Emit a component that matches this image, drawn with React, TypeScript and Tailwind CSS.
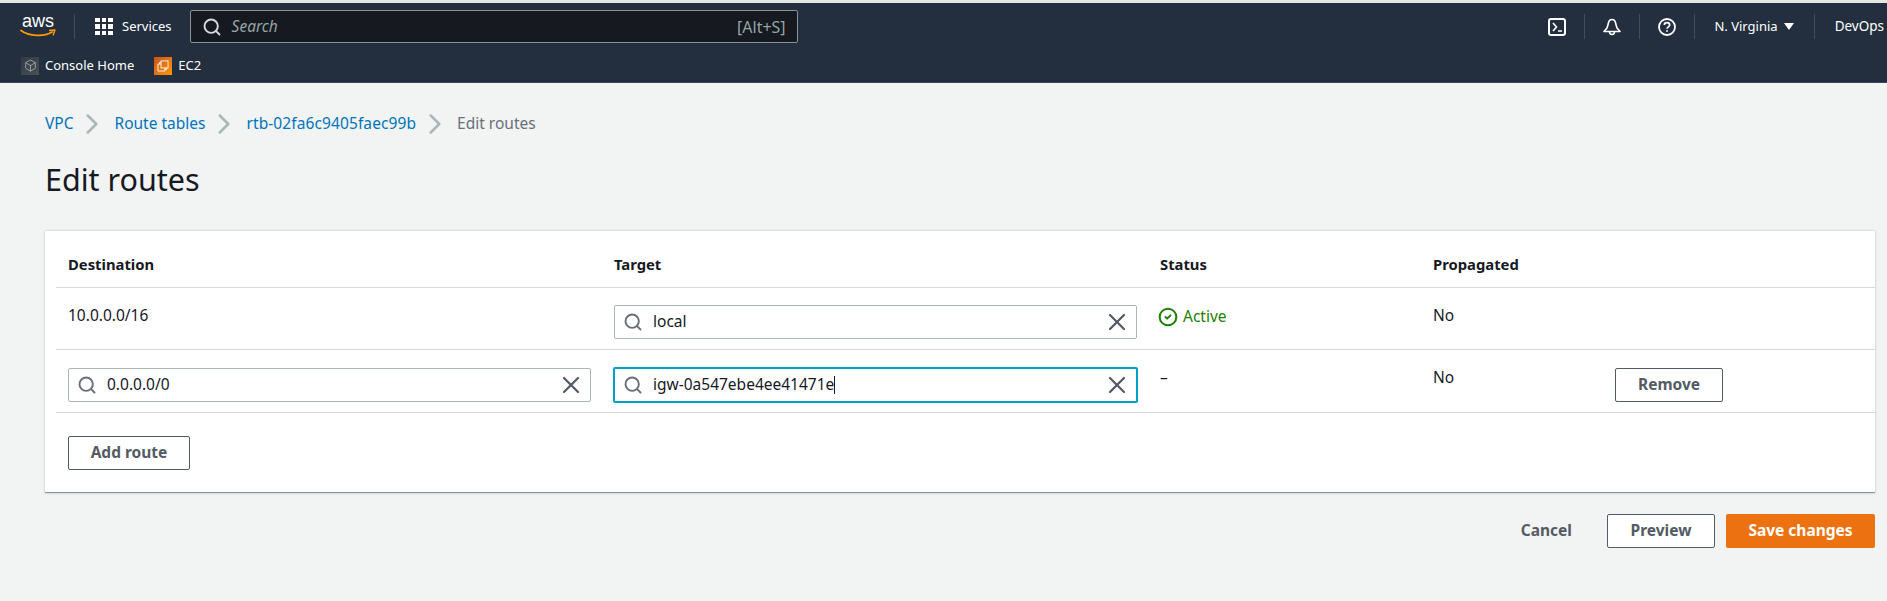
import { Search, X, CircleCheck, ChevronRight, Box } from "lucide-react";

const font = "font-['Noto_Sans',sans-serif]";

const Divider = () => <div className="w-px h-[25px] bg-[#414d5c]" />;

const AwsLogo = () => (
	<div className="w-[36px] h-[24px] flex flex-col items-center">
		<span className="text-[18px] leading-[13px] text-white font-['Liberation_Sans',sans-serif]">aws</span>
		<svg viewBox="0 0 36 9" className="w-[36px] h-[9px] mt-[1px]" fill="none">
			<path d="M1 1.5C9 7.5 24 8 32 3" stroke="#ff9900" strokeWidth="1.8" strokeLinecap="round" />
			<path d="M29 1.5L35 1L33 6.5" stroke="#ff9900" strokeWidth="1.4" strokeLinejoin="round" />
		</svg>
	</div>
);

const GridIcon = () => (
	<div className="grid grid-cols-3 gap-[2px] w-[18px] h-[18px]">
		{Array.from({ length: 9 }).map((_, i) => (
			<div className="bg-white w-[4.67px] h-[4.67px]" key={i} />
		))}
	</div>
);

const TerminalIcon = () => (
	<svg viewBox="0 0 18 18" className="w-[18px] h-[18px]" fill="none" stroke="white" strokeWidth="2">
		<rect x="1" y="1" width="16" height="16" rx="2" />
		<path d="M5 5l3.5 4L5 13M10 13h4" strokeWidth="1.6" />
	</svg>
);

const BellIcon = () => (
	<svg viewBox="0 0 18 18" className="w-[18px] h-[18px]" fill="none" stroke="white" strokeWidth="1.6" strokeLinejoin="round">
		<path d="M9 1.5C6.5 1.5 5.5 3.5 5.2 6L4 10L1 13.5H17L14 10L12.8 6C12.5 3.5 11.5 1.5 9 1.5Z" />
		<path d="M6.5 13.5C6.5 15.5 7.5 16.5 9 16.5S11.5 15.5 11.5 13.5" />
	</svg>
);

const HelpIcon = () => (
	<svg viewBox="0 0 18 18" className="w-[18px] h-[18px]" fill="none" stroke="white" strokeWidth="1.8">
		<circle cx="9" cy="9" r="8" />
		<path d="M6.3 7C6.3 5.4 7.5 4.6 9 4.6S11.7 5.5 11.7 7C11.7 8.8 9 8.9 9 10.8" strokeWidth="1.7" />
		<path d="M9 12.2V13.8" strokeWidth="1.8" />
	</svg>
);

const Ec2Icon = () => (
	<div className="w-[18px] h-[18px] bg-linear-to-br from-[#c8511b] to-[#ff9900] flex items-center justify-center">
		<svg viewBox="0 0 18 18" className="w-[14px] h-[14px]" fill="none" stroke="white" strokeWidth="1.1">
			<rect x="6.5" y="2.5" width="9" height="9" />
			<path d="M6.5 6.5H2.5V15.5H11.5V11.5" />
			<path d="M4.5 6.5V4.5H6.5M11.5 13.5H13.5V11.5" />
		</svg>
	</div>
);

const ConsoleIcon = () => (
	<div className="w-[18px] h-[18px] bg-linear-to-br from-[#2e3a48] to-[#4b4f54] flex items-center justify-center">
		<Box className="w-[13px] h-[13px] text-[#c4c8cc]" strokeWidth={1.2} />
	</div>
);

const TopNav = () => (
	<div className="h-[79px] bg-[#232f3e] border-t-[3px] border-[#e4e6e6] box-content flex flex-col border-b border-b-[#3a4653]">
		{/* TOP ROW */}
		<div className="flex items-center justify-between h-[47px]">
			<div className="flex items-center">
				<div className="pl-[20px] pr-[18px]">
					<AwsLogo />
				</div>
				<Divider />
				<div className="ml-[20px]">
					<GridIcon />
				</div>
				<span className="ml-[9px] text-[13px] text-white">Services</span>
				<div className="ml-[18px] w-[608px] h-[33px] bg-[#16191f] border border-[#879596] rounded-[2px] flex items-center pl-[11px] pr-[11px]">
					<Search className="w-[20px] h-[20px] text-[#d5dbdb]" strokeWidth={2.3} />
					<span className="ml-[10px] text-[15.5px] italic text-[#95a5a6] flex-1">Search</span>
					<span className="text-[16px] text-[#95a5a6]">[Alt+S]</span>
				</div>
			</div>
			<div className="flex items-center pr-[3px]">
				<TerminalIcon />
				<div className="mx-[18px]">
					<Divider />
				</div>
				<BellIcon />
				<div className="mx-[18px]">
					<Divider />
				</div>
				<HelpIcon />
				<div className="mx-[18px]">
					<Divider />
				</div>
				<span className="ml-[1px] text-[13px] text-white">N. Virginia</span>
				<div className="ml-[6px] w-0 h-0 border-x-[5px] border-x-transparent border-t-[7px] border-t-white" />
				<div className="ml-[20px] mr-[20px]">
					<Divider />
				</div>
				<span className="text-[13.5px] text-white">DevOps</span>
			</div>
		</div>
		{/* SHORTCUTS */}
		<div className="flex items-center pl-[21px] mt-[6px]">
			<ConsoleIcon />
			<span className="ml-[6px] text-[13px] text-white">Console Home</span>
			<div className="ml-[20px]">
				<Ec2Icon />
			</div>
			<span className="ml-[6px] text-[13px] text-white">EC2</span>
		</div>
	</div>
);

const Breadcrumbs = () => {
	const links = [
		{ label: "VPC", cls: "text-[#0073bb]" },
		{ label: "Route tables", cls: "text-[#0073bb]" },
		{ label: "rtb-02fa6c9405faec99b", cls: "text-[#0073bb] tracking-[0.1px]" },
	];
	return (
		<div className="flex items-center text-[15.5px] h-[20px]">
			{links.map((l) => (
				<div className="flex items-center" key={l.label}>
					<a className={l.cls}>{l.label}</a>
					<ChevronRight className="w-[34px] h-[34px] ml-[2px] mr-[5px] text-[#aab7b8]" strokeWidth={1.8} />
				</div>
			))}
			<span className="text-[#687078]">Edit routes</span>
		</div>
	);
};

const SearchInput = ({ value, focused }: { value: string; focused?: boolean }) => (
	<div
		className={
			focused
				? "w-[525px] h-[36px] -ml-px bg-white border-2 border-[#00a1c9] rounded-[2px] flex items-center pl-[8px] pr-[5px]"
				: "w-[523px] h-[34px] bg-white border border-[#aab7b8] rounded-[2px] flex items-center pl-[8px] pr-[5px]"
		}
	>
		<Search className="w-[20px] h-[20px] text-[#687078]" strokeWidth={2.3} />
		<span className="ml-[10px] text-[15.5px] text-[#16191f] flex-1 flex items-center">
			{value}
			{focused && <span className="w-px h-[18px] bg-[#16191f]" />}
		</span>
		<X className="w-[28px] h-[28px] text-[#545b64]" strokeWidth={1.9} />
	</div>
);

const OutlineButton = ({ label, width }: { label: string; width: string }) => (
	<button className={`${width} h-[34px] bg-white border border-[#545b64] rounded-[2px] text-[15.5px] font-bold text-[#545b64]`}>
		{label}
	</button>
);

const rowClass = "ml-[11px] pl-[12px] grid grid-cols-[546px_546px_273px_182px_1fr] border-b border-[#d5dbdb]";

const App = () => {
	return (
		<div className={`${font} w-full h-[601px] bg-[#f2f3f3] overflow-hidden`}>
			<TopNav />
			<div className="px-[45px] pr-[12px] pt-[31px]">
				<Breadcrumbs />
				<h1 className="mt-[25px] text-[30.5px] leading-[40px] text-[#16191f]">Edit routes</h1>

				{/* ROUTES CARD */}
				<div className="mt-[32px] h-[262px] bg-white border-b border-b-[#879596] shadow-[0_0_2px_rgba(0,28,36,0.3)]">
					<div className={`${rowClass} h-[57px] pt-[10px] items-center text-[14.8px] font-bold text-[#16191f]`}>
						<span>Destination</span>
						<span>Target</span>
						<span>Status</span>
						<span>Propagated</span>
					</div>
					<div className={`${rowClass} h-[62px] text-[15.5px] text-[#16191f]`}>
						<span className="pt-[16px]">10.0.0.0/16</span>
						<div className="pt-[17px]">
							<SearchInput value="local" />
						</div>
						<div className="pt-[17px] -ml-[2px] flex items-start gap-[5px] text-[#1d8102]">
							<CircleCheck className="w-[20px] h-[20px] mt-[2px]" strokeWidth={2.4} />
							<span>Active</span>
						</div>
						<span className="pt-[16px]">No</span>
					</div>
					<div className={`${rowClass} h-[63px] text-[15.5px] text-[#16191f]`}>
						<div className="pt-[18px]">
							<SearchInput value="0.0.0.0/0" />
						</div>
						<div className="pt-[17px]">
							<SearchInput value="igw-0a547ebe4ee41471e" focused />
						</div>
						<span className="pt-[16px]">–</span>
						<span className="pt-[16px]">No</span>
						<div className="pt-[18px]">
							<OutlineButton label="Remove" width="w-[108px]" />
						</div>
					</div>
					<div className="pl-[23px] pt-[23px]">
						<OutlineButton label="Add route" width="w-[122px]" />
					</div>
				</div>

				{/* ACTIONS */}
				<div className="mt-[21px] flex items-center justify-end">
					<span className="text-[15.5px] font-bold text-[#545b64] mr-[35px]">Cancel</span>
					<OutlineButton label="Preview" width="w-[108px]" />
					<button className="ml-[11px] w-[149px] h-[34px] bg-[#ec7211] rounded-[2px] text-[15.5px] font-bold text-white">
						Save changes
					</button>
				</div>
			</div>
		</div>
	);
};

export default App;
